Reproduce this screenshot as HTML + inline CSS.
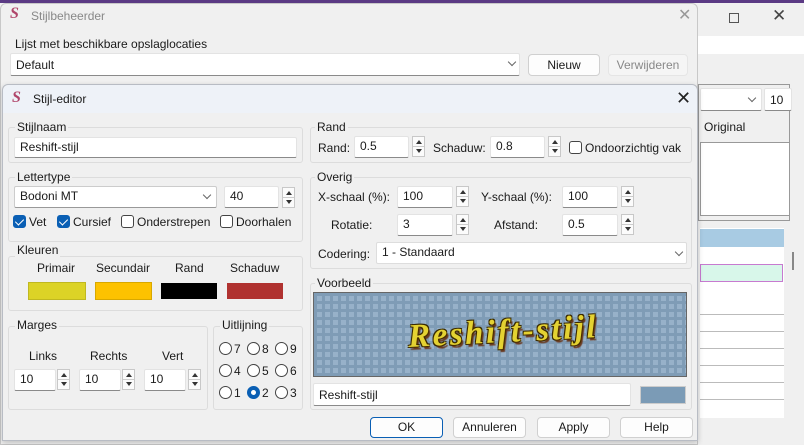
<!DOCTYPE html>
<html><head><meta charset="utf-8"><style>
*{box-sizing:border-box;margin:0;padding:0}
body{width:804px;height:445px;overflow:hidden;background:#f3f3f3;font-family:"Liberation Sans",sans-serif;font-size:12px;color:#1a1a1a;position:relative}
.a{position:absolute}
.inp{position:absolute;background:#fff;border:1px solid #e3e3e3;border-bottom:1px solid #8a8a8a;border-radius:2px;padding:0 0 0 5px;line-height:19px;font-size:12px}
.grp{position:absolute;border:1px solid #dcdcdc;border-radius:3px}
.lab{position:absolute;background:#f0f0f0;padding:0 2px;font-size:12px}
.btn{position:absolute;background:#fdfdfd;border:1px solid #d0d0d0;border-radius:4px;text-align:center;line-height:19px;font-size:12px}
.spin{position:absolute;width:13px;height:21px;border:1px solid #c8c8c8;background:#fbfbfb}
.spin:before{content:"";position:absolute;left:3px;top:3px;border:3px solid transparent;border-bottom:4px solid #333;border-top:0}
.spin:after{content:"";position:absolute;left:3px;bottom:3px;border:3px solid transparent;border-top:4px solid #333;border-bottom:0}
.spin i{position:absolute;left:0;right:0;top:9px;border-top:1px solid #ccc}
.cb{position:absolute;width:13px;height:13px;border:1px solid #444;border-radius:3px;background:#fff}
.cb.on{background:#0a5fb4;border-color:#0a5fb4}
.cb.on:after{content:"";position:absolute;left:3px;top:1px;width:4px;height:7px;border:solid #fff;border-width:0 1.5px 1.5px 0;transform:rotate(45deg)}
.rd{position:absolute;width:13px;height:13px;border:1px solid #444;border-radius:50%;background:#fff}
.rd.on{border:4px solid #0a5fb4}
.chev{position:absolute;width:6px;height:6px;border:solid #666;border-width:0 1px 1px 0;transform:rotate(45deg)}
.logo{position:absolute;font-family:"Liberation Serif",serif;font-weight:bold;font-style:italic;color:#b0456a;font-size:16px}
</style></head><body>
<div class="a" style="left:0;top:0;width:804px;height:3px;background:#5b3a84"></div>
<div class="a" style="left:690px;top:3px;width:114px;height:442px;background:#f0f0f0;border-left:1px solid #ccc"></div>
<div class="a" style="left:729px;top:13px;width:10px;height:10px;border:1px solid #555"></div>
<div class="a" style="left:772px;top:6px;font-size:17px;color:#444">✕</div>
<div class="a" style="left:698px;top:36px;width:106px;height:18px;background:#fff"></div>
<div class="a" style="left:698px;top:84px;width:92px;height:137px;border:1px solid #999;background:#f0f0f0"></div>
<div class="inp" style="left:700px;top:88px;width:62px;height:23px"></div>
<div class="chev" style="left:749px;top:95px"></div>
<div class="inp" style="left:764px;top:88px;width:28px;height:23px;line-height:22px">10</div>
<div class="a" style="left:704px;top:120px;font-size:12px">Original</div>
<div class="a" style="left:700px;top:142px;width:90px;height:74px;background:#fff;border:1px solid #999"></div>
<div class="a" style="left:700px;top:228px;width:84px;height:190px;background:#fff"></div>
<div class="a" style="left:700px;top:229px;width:84px;height:18px;background:#a8cbe3"></div>
<div class="a" style="left:700px;top:264px;width:83px;height:18px;background:#d8f7ea;border:1px solid #c77ad0"></div>
<div class="a" style="left:700px;top:298px;width:84px;height:103px;background:repeating-linear-gradient(#fff 0 16px,#bbb 16px 17px)"></div>
<div class="a" style="left:792px;top:252px;width:2px;height:18px;background:#888"></div>
<div class="a" style="left:698px;top:420px;width:106px;height:25px;background:#f0f0f0"></div>

<div class="a" style="left:0;top:3px;width:698px;height:442px;background:#f0f0f0;border:1px solid #c8c8c8;border-radius:6px 6px 0 0"></div>
<div class="logo" style="left:10px;top:5px">S</div>
<div class="a" style="left:31px;top:9px;font-size:12px;color:#888">Stijlbeheerder</div>
<div class="a" style="left:678px;top:5px;font-size:16px;color:#999">✕</div>
<div class="a" style="left:15px;top:37px">Lijst met beschikbare opslaglocaties</div>
<div class="inp" style="left:10px;top:53px;width:510px;height:23px;line-height:22px">Default</div>
<div class="chev" style="left:509px;top:59px"></div>
<div class="btn" style="left:528px;top:54px;width:72px;height:22px;line-height:21px">Nieuw</div>
<div class="btn" style="left:608px;top:54px;width:80px;height:22px;line-height:21px;color:#888;background:#f5f5f5;border-color:#e5e5e5">Verwijderen</div>

<div class="a" style="left:2px;top:84px;width:696px;height:357px;background:#f0f0f0;border:1px solid #b8bcc4;border-radius:6px 6px 0 0;box-shadow:0 2px 6px rgba(0,0,0,.2)"></div>
<div class="a" style="left:3px;top:85px;width:694px;height:28px;background:#eef2f8;border-radius:6px 6px 0 0"></div>
<div class="logo" style="left:12px;top:89px">S</div>
<div class="a" style="left:33px;top:92px">Stijl-editor</div>
<div class="a" style="left:676px;top:88px;font-size:18px;color:#222">✕</div>

<div class="grp" style="left:8px;top:127px;width:295px;height:36px"></div>
<div class="lab" style="left:15px;top:120px">Stijlnaam</div>
<div class="inp" style="left:14px;top:137px;width:283px;height:21px">Reshift-stijl</div>

<div class="grp" style="left:8px;top:177px;width:295px;height:65px"></div>
<div class="lab" style="left:15px;top:170px">Lettertype</div>
<div class="inp" style="left:14px;top:186px;width:203px;height:22px;border:1px solid #ccc;border-bottom-color:#999">Bodoni MT</div>
<div class="chev" style="left:204px;top:192px"></div>
<div class="inp" style="left:224px;top:186px;width:55px;height:22px">40</div>
<div class="spin" style="left:282px;top:187px"><i></i></div>
<div class="cb on" style="left:13px;top:215px"></div><div class="a" style="left:29px;top:215px">Vet</div>
<div class="cb on" style="left:57px;top:215px"></div><div class="a" style="left:73px;top:215px">Cursief</div>
<div class="cb" style="left:121px;top:215px"></div><div class="a" style="left:137px;top:215px">Onderstrepen</div>
<div class="cb" style="left:220px;top:215px"></div><div class="a" style="left:236px;top:215px">Doorhalen</div>

<div class="grp" style="left:8px;top:256px;width:295px;height:55px"></div>
<div class="lab" style="left:15px;top:243px">Kleuren</div>
<div class="a" style="left:37px;top:261px">Primair</div>
<div class="a" style="left:96px;top:261px">Secundair</div>
<div class="a" style="left:175px;top:261px">Rand</div>
<div class="a" style="left:230px;top:261px">Schaduw</div>
<div class="a" style="left:28px;top:282px;width:58px;height:18px;background:#dcd326;border:1px solid #c0b820"></div>
<div class="a" style="left:95px;top:282px;width:57px;height:18px;background:#fdc200;border:1px solid #d8a800"></div>
<div class="a" style="left:161px;top:283px;width:56px;height:16px;background:#000"></div>
<div class="a" style="left:227px;top:283px;width:56px;height:16px;background:#b03230"></div>

<div class="grp" style="left:8px;top:326px;width:200px;height:84px"></div>
<div class="lab" style="left:15px;top:318px">Marges</div>
<div class="a" style="left:29px;top:349px">Links</div>
<div class="a" style="left:90px;top:349px">Rechts</div>
<div class="a" style="left:162px;top:349px">Vert</div>
<div class="inp" style="left:14px;top:369px;width:42px;height:22px">10</div><div class="spin" style="left:57px;top:369px"><i></i></div>
<div class="inp" style="left:79px;top:369px;width:42px;height:22px">10</div><div class="spin" style="left:122px;top:369px"><i></i></div>
<div class="inp" style="left:144px;top:369px;width:42px;height:22px">10</div><div class="spin" style="left:188px;top:369px"><i></i></div>

<div class="grp" style="left:213px;top:326px;width:90px;height:84px"></div>
<div class="lab" style="left:220px;top:318px">Uitlijning</div>
<div class="rd" style="left:219px;top:342px"></div><div class="a" style="left:234px;top:342px">7</div>
<div class="rd" style="left:247px;top:342px"></div><div class="a" style="left:262px;top:342px">8</div>
<div class="rd" style="left:275px;top:342px"></div><div class="a" style="left:290px;top:342px">9</div>
<div class="rd" style="left:219px;top:364px"></div><div class="a" style="left:234px;top:364px">4</div>
<div class="rd" style="left:247px;top:364px"></div><div class="a" style="left:262px;top:364px">5</div>
<div class="rd" style="left:275px;top:364px"></div><div class="a" style="left:290px;top:364px">6</div>
<div class="rd" style="left:219px;top:386px"></div><div class="a" style="left:234px;top:386px">1</div>
<div class="rd on" style="left:247px;top:386px"></div><div class="a" style="left:262px;top:386px">2</div>
<div class="rd" style="left:275px;top:386px"></div><div class="a" style="left:290px;top:386px">3</div>

<div class="grp" style="left:310px;top:127px;width:382px;height:36px"></div>
<div class="lab" style="left:315px;top:120px">Rand</div>
<div class="a" style="left:318px;top:141px">Rand:</div>
<div class="inp" style="left:354px;top:136px;width:55px;height:22px">0.5</div><div class="spin" style="left:412px;top:136px"><i></i></div>
<div class="a" style="left:433px;top:141px">Schaduw:</div>
<div class="inp" style="left:490px;top:136px;width:55px;height:22px">0.8</div><div class="spin" style="left:548px;top:136px"><i></i></div>
<div class="cb" style="left:569px;top:141px"></div><div class="a" style="left:585px;top:141px">Ondoorzichtig vak</div>

<div class="grp" style="left:310px;top:177px;width:382px;height:92px"></div>
<div class="lab" style="left:315px;top:170px">Overig</div>
<div class="a" style="left:318px;top:190px">X-schaal (%):</div>
<div class="inp" style="left:397px;top:186px;width:56px;height:22px">100</div><div class="spin" style="left:456px;top:186px"><i></i></div>
<div class="a" style="left:481px;top:190px">Y-schaal (%):</div>
<div class="inp" style="left:562px;top:186px;width:56px;height:22px">100</div><div class="spin" style="left:621px;top:186px"><i></i></div>
<div class="a" style="left:331px;top:218px">Rotatie:</div>
<div class="inp" style="left:397px;top:214px;width:56px;height:22px">3</div><div class="spin" style="left:456px;top:214px"><i></i></div>
<div class="a" style="left:494px;top:218px">Afstand:</div>
<div class="inp" style="left:562px;top:214px;width:56px;height:22px">0.5</div><div class="spin" style="left:621px;top:214px"><i></i></div>
<div class="a" style="left:318px;top:247px">Codering:</div>
<div class="inp" style="left:376px;top:242px;width:311px;height:22px;border:1px solid #ddd">1 - Standaard</div>
<div class="chev" style="left:676px;top:249px"></div>

<div class="grp" style="left:310px;top:283px;width:382px;height:127px"></div>
<div class="lab" style="left:315px;top:276px">Voorbeeld</div>
<div class="a" style="left:313px;top:292px;width:374px;height:85px;border:1px solid #666;background-color:#97b1c9;background-image:linear-gradient(90deg,#7f9cb6 3px,transparent 3px),linear-gradient(#7f9cb6 3px,transparent 3px);background-size:8px 8px;overflow:hidden">
<div class="a" style="left:94px;top:21px;transform:rotate(-3deg);font-family:'Liberation Serif',serif;font-weight:bold;font-style:italic;font-size:33px;color:#e4d232;letter-spacing:2.5px;text-shadow:1px 1px 0 #4a3000,-1px -1px 0 #3a2a00,1px -1px 0 #3a2a00,-1px 1px 0 #3a2a00,2px 3px 1px #6b3a20">Reshift-stijl</div></div>
<div class="inp" style="left:313px;top:383px;width:318px;height:23px;line-height:22px">Reshift-stijl</div>
<div class="a" style="left:640px;top:386px;width:46px;height:18px;background:#7b9bb6;border:1px solid #ccc"></div>

<div class="btn" style="left:370px;top:417px;width:73px;height:21px;border:1px solid #0a5fb4;border-radius:4px">OK</div>
<div class="btn" style="left:453px;top:417px;width:73px;height:21px">Annuleren</div>
<div class="btn" style="left:537px;top:417px;width:73px;height:21px">Apply</div>
<div class="btn" style="left:620px;top:417px;width:73px;height:21px">Help</div>
</body></html>
